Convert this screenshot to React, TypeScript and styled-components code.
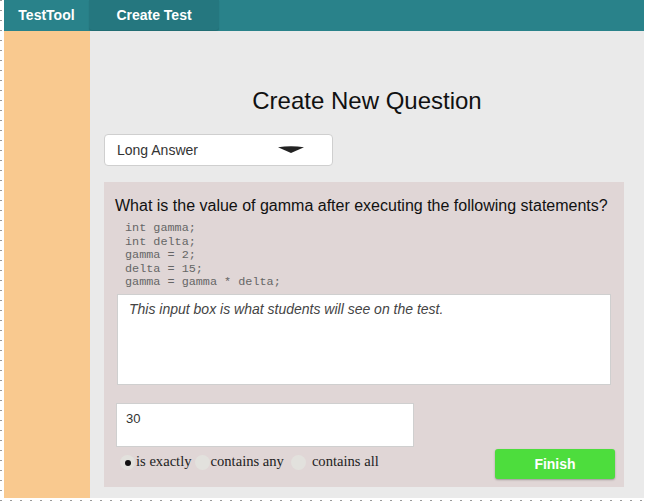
import React from "react";
import styled, { createGlobalStyle } from "styled-components";

const Global = createGlobalStyle`
  html, body { margin: 0; padding: 0; }
  body {
    background-color: #ffffff;
    background-image: radial-gradient(circle at 1px 0.5px, #9a9a9a 0.9px, transparent 1.1px);
    background-size: 10px 10px;
    background-position: 0 0;
    height: 501px;
    overflow: hidden;
    font-family: "Liberation Sans", Arial, sans-serif;
  }
`;

const Shell = styled.div`
  width: 640px;
  height: 498px;
  margin-left: 4px;
  display: flex;
  flex-direction: column;
`;

const TopBar = styled.header`
  height: 31px;
  flex: none;
  background: #29828a;
  display: flex;
  align-items: stretch;
`;

const Brand = styled.div`
  width: 85px;
  display: flex;
  align-items: center;
  justify-content: center;
  color: #fff;
  font-weight: bold;
  font-size: 14px;
  padding-bottom: 1px;
`;

const Tab = styled.div`
  width: 130px;
  height: 30px;
  background: #25777f;
  border-radius: 0 0 3px 3px;
  box-shadow: 0 1px 1px rgba(0, 0, 0, 0.18);
  display: flex;
  align-items: center;
  justify-content: center;
  color: #fff;
  font-weight: bold;
  font-size: 14px;
  padding-bottom: 1px;
  box-sizing: border-box;
`;

const Body = styled.div`
  flex: 1;
  display: flex;
`;

const Sidebar = styled.aside`
  width: 86px;
  background: #f9c98f;
`;

const Main = styled.main`
  flex: 1;
  background: #eaeaea;
  padding: 57px 20px 0 14px;
  display: flex;
  flex-direction: column;
`;

const Title = styled.h1`
  margin: 0;
  font-weight: normal;
  font-size: 24px;
  line-height: 26px;
  color: #111;
  text-align: center;
  padding-left: 6px;
`;

const Select = styled.div`
  margin-top: 20px;
  width: 229px;
  height: 32px;
  box-sizing: border-box;
  background: #fff;
  border: 1px solid #cfcfcf;
  border-radius: 4px;
  display: flex;
  align-items: center;
  justify-content: space-between;
  padding: 0 28px 0 12px;
  font-size: 14px;
  color: #333;
`;

const Card = styled.section`
  margin-top: 16px;
  width: 520px;
  box-sizing: border-box;
  background: #e0d6d6;
  padding: 14px 9px 8px 11px;
  display: flex;
  flex-direction: column;
`;

const Question = styled.div`
  font-size: 16px;
  line-height: 20px;
  color: #111;
`;

const Code = styled.pre`
  margin: 6px 0 0 10px;
  font-family: "Liberation Mono", "Courier New", monospace;
  font-size: 11.8px;
  line-height: 13.6px;
  color: #666;
`;

const BigInput = styled.textarea`
  margin: 4px 2px 0 2px;
  width: 494px;
  height: 91px;
  box-sizing: border-box;
  border: 1px solid #cfcfcf;
  background: #fff;
  resize: none;
  padding: 6px 11px;
  font-family: "Liberation Sans", Arial, sans-serif;
  font-size: 14px;
  line-height: 17px;
  outline: none;
  &::placeholder {
    color: #444;
    font-style: italic;
  }
`;

const BottomRow = styled.div`
  margin-top: 18px;
  display: flex;
  justify-content: space-between;
  align-items: flex-end;
`;

const LeftCol = styled.div`
  display: flex;
  flex-direction: column;
`;

const AnswerInput = styled.textarea`
  margin-left: 1px;
  width: 298px;
  height: 44px;
  box-sizing: border-box;
  border: 1px solid #cfcfcf;
  background: #fff;
  resize: none;
  padding: 7px 9px;
  font-family: "Liberation Sans", Arial, sans-serif;
  font-size: 13px;
  line-height: 16px;
  color: #333;
  outline: none;
`;

const Radios = styled.div`
  display: flex;
  align-items: center;
  height: 24px;
  margin: 3px 0 5px 5px;
`;

const RadioItem = styled.label<{ $gap: number }>`
  display: flex;
  align-items: center;
  margin-right: ${(p) => p.$gap}px;
  font-family: "Liberation Serif", "Times New Roman", serif;
  font-size: 14.6px;
  color: #222;
`;

const Dot = styled.span<{ $on?: boolean; $space?: number }>`
  width: 15px;
  height: 15px;
  border-radius: 50%;
  background: #e2e1dd;
  margin-right: ${(p) => p.$space ?? 1}px;
  display: flex;
  align-items: center;
  justify-content: center;
  margin-top: 2px;
  &::after {
    content: "";
    display: ${(p) => (p.$on ? "block" : "none")};
    width: 6px;
    height: 6px;
    border-radius: 50%;
    background: #111;
  }
`;

const Finish = styled.button`
  width: 120px;
  height: 30px;
  border: none;
  border-radius: 3px;
  background: #4ddd3d;
  color: #fff;
  font-family: "Liberation Sans", Arial, sans-serif;
  font-weight: bold;
  font-size: 14px;
  box-shadow: 0 1px 2px rgba(0, 0, 0, 0.3);
  cursor: pointer;
`;

const Caret = () => (
  <svg width="26" height="8" viewBox="0 0 26 8">
    <path d="M0 1.2 Q13 -0.6 26 1.2 L13 7 Z" fill="#222" />
  </svg>
);

export default function App() {
  return (
    <>
      <Global />
      <Shell>
        <TopBar>
          <Brand>TestTool</Brand>
          <Tab>Create Test</Tab>
        </TopBar>
        <Body>
          <Sidebar />
          <Main>
            <Title>Create New Question</Title>
            <Select>
              <span>Long Answer</span>
              <Caret />
            </Select>
            <Card>
              <Question>What is the value of gamma after executing the following statements?</Question>
              <Code>{`int gamma;
int delta;
gamma = 2;
delta = 15;
gamma = gamma * delta;`}</Code>
              <BigInput placeholder="This input box is what students will see on the test." />
              <BottomRow>
                <LeftCol>
                  <AnswerInput defaultValue="30" />
                  <Radios>
                    <RadioItem $gap={3}>
                      <Dot $on />
                      is exactly
                    </RadioItem>
                    <RadioItem $gap={7}>
                      <Dot />
                      contains any
                    </RadioItem>
                    <RadioItem $gap={0}>
                      <Dot $space={6} />
                      contains all
                    </RadioItem>
                  </Radios>
                </LeftCol>
                <Finish>Finish</Finish>
              </BottomRow>
            </Card>
          </Main>
        </Body>
      </Shell>
    </>
  );
}
